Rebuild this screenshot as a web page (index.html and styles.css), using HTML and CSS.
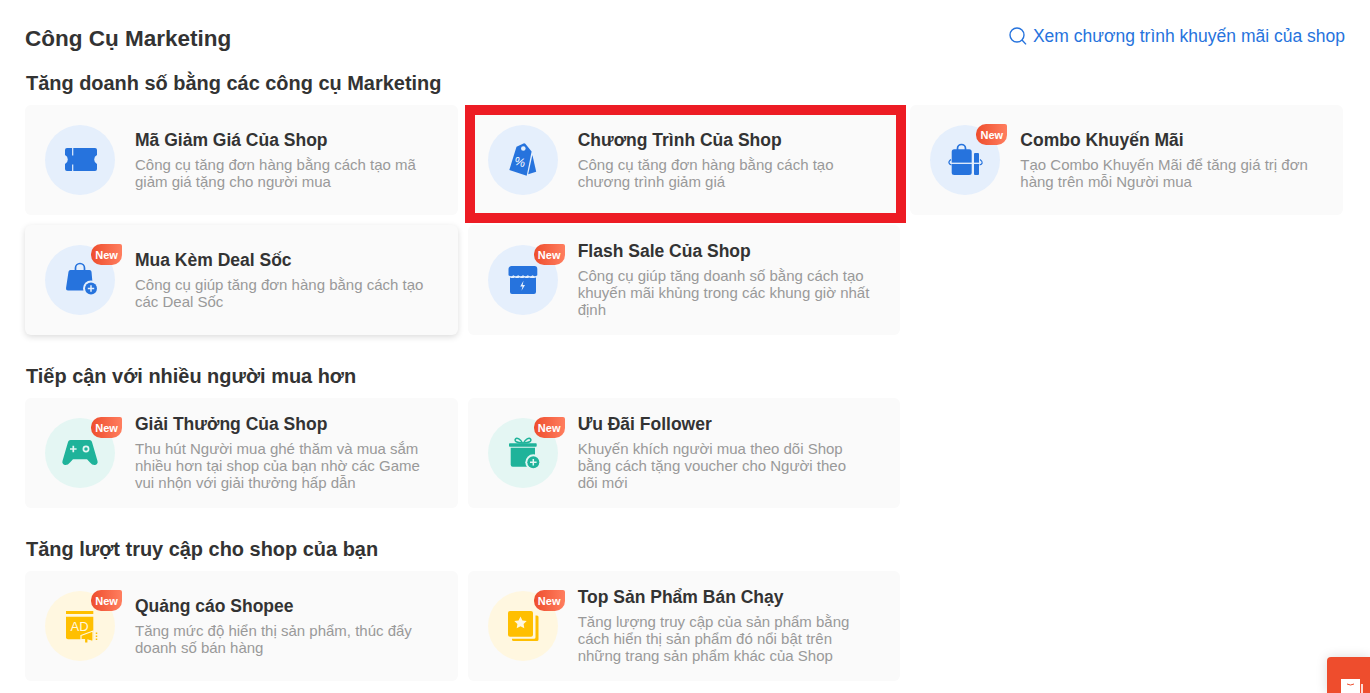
FILE: index.html
```html
<!DOCTYPE html>
<html lang="vi">
<head>
<meta charset="utf-8">
<title>Công Cụ Marketing</title>
<link rel="stylesheet" href="styles.css">
</head>
<body>
<main class="page">
  <header class="top">
    <h1 class="page-title">Công Cụ Marketing</h1>
    <a class="promo-link" href="#">
      <svg class="search-icon" viewBox="0 0 18 18" width="18" height="18"><circle cx="8" cy="8" r="7" fill="none" stroke="#2673dd" stroke-width="1.4"/><path d="M13 13l4 4.4" stroke="#2673dd" stroke-width="1.4" fill="none"/></svg>
      <span>Xem chương trình khuyến mãi của shop</span>
    </a>
  </header>

  <section class="section">
    <h2 class="section-title">Tăng doanh số bằng các công cụ Marketing</h2>
    <div class="grid">
      <article class="card">
        <div class="icon icon-blue">
          <svg viewBox="0 0 70 70" width="70" height="70"><path class="fill-blue" d="M22 23H50a2 2 0 0 1 2 2v5a5 5 0 0 0 0 9v5a2 2 0 0 1-2 2H22a2 2 0 0 1-2-2v-5a5 5 0 0 0 0-9v-5a2 2 0 0 1 2-2z"/><path d="M27.7 23v7.5M27.7 39.5V46" stroke="#e5effc" stroke-width="1.2" fill="none"/></svg>
        </div>
        <div class="body">
          <h3 class="card-title">Mã Giảm Giá Của Shop</h3>
          <p class="desc">Công cụ tăng đơn hàng bằng cách tạo mã giảm giá tặng cho người mua</p>
        </div>
      </article>
      <article class="card">
        <div class="icon icon-blue">
          <svg viewBox="0 0 70 70" width="70" height="70"><path class="fill-blue" d="M28.500 21.800l7-3.300q1-.4 1.800.3l6.300 7.700-4.900 24.200-17.400-5.700z"/><path class="fill-blue" d="M44.400 30l3.800 16.700-8 2.600z"/><circle cx="35.300" cy="23.500" r="2.300" fill="#e5effc"/><text class="percent" x="26.500" y="41" transform="rotate(15 32 37)">%</text></svg>
        </div>
        <div class="body">
          <h3 class="card-title">Chương Trình Của Shop</h3>
          <p class="desc">Công cụ tăng đơn hàng bằng cách tạo chương trình giảm giá</p>
        </div>
        <div class="highlight"></div>
      </article>
      <article class="card">
        <div class="icon icon-blue">
          <svg viewBox="0 0 70 70" width="70" height="70"><path d="M27.500 25v-1.500a4 4 0 0 1 8 0V25" fill="none" stroke="#2673dd" stroke-width="1.700"/><rect class="fill-blue" x="21.700" y="24.300" width="20" height="25.700" rx="2.500"/><rect class="fill-blue" x="44" y="28" width="5" height="22" rx="1"/><path d="M21 38.300h29" stroke="#e5effc" stroke-width="1.300"/><path d="M21 34.500q-2.600 2-2 3.500t2.500 2M50 34.500q2.600 2 2.200 3.500t-2.700 2" fill="none" stroke="#2673dd" stroke-width="1.200"/></svg>
          <span class="badge">New</span>
        </div>
        <div class="body">
          <h3 class="card-title">Combo Khuyến Mãi</h3>
          <p class="desc">Tạo Combo Khuyến Mãi để tăng giá trị đơn hàng trên mỗi Người mua</p>
        </div>
      </article>
      <article class="card card-hover">
        <div class="icon icon-blue">
          <svg viewBox="0 0 70 70" width="70" height="70"><path d="M30.500 25v-2a4.500 4.500 0 0 1 9 0v2" fill="none" stroke="#2673dd" stroke-width="1.700"/><path class="fill-blue" d="M25.500 25h19a2 2 0 0 1 2 1.800l1.500 16.700a2 2 0 0 1-2 2H23a2 2 0 0 1-2-2.200l2.500-16.600a2 2 0 0 1 2-1.700z"/><circle cx="46" cy="43.500" r="8" fill="#e5effc"/><circle cx="46" cy="43.500" r="6" fill="#2673dd"/><path d="M42.800 43.500h6.400M46 40.300v6.400" stroke="#e5effc" stroke-width="1.500"/></svg>
          <span class="badge">New</span>
        </div>
        <div class="body">
          <h3 class="card-title">Mua Kèm Deal Sốc</h3>
          <p class="desc">Công cụ giúp tăng đơn hàng bằng cách tạo các Deal Sốc</p>
        </div>
      </article>
      <article class="card">
        <div class="icon icon-blue">
          <svg viewBox="0 0 70 70" width="70" height="70"><path class="fill-blue" d="M24 21h22a3 3 0 0 1 3.300 3v6.300q-2.300 1.700-4.700 0-2.400 1.700-4.800 0-2.400 1.700-4.800 0-2.400 1.700-4.800 0-2.400 1.700-4.800 0-2.300 1.700-4.900 0V24a3 3 0 0 1 3.500-3z"/><path class="fill-blue" d="M22 32.500q2.500 1.200 4.800 0 2.400 1.200 4.800 0 2.400 1.200 4.800 0 2.400 1.200 4.800 0 2.400 1.200 6.800 0V47a2 2 0 0 1-2 2H24a2 2 0 0 1-2-2z"/><path d="M35.500 35.800l-3.300 5.700h2.300l-1 4.300 3.500-5.900h-2.300z" fill="#e5effc"/></svg>
          <span class="badge">New</span>
        </div>
        <div class="body">
          <h3 class="card-title">Flash Sale Của Shop</h3>
          <p class="desc">Công cụ giúp tăng doanh số bằng cách tạo khuyến mãi khủng trong các khung giờ nhất định</p>
        </div>
      </article>
    </div>
  </section>

  <section class="section">
    <h2 class="section-title">Tiếp cận với nhiều người mua hơn</h2>
    <div class="grid">
      <article class="card">
        <div class="icon icon-teal">
          <svg viewBox="0 0 70 70" width="70" height="70"><path class="fill-teal" d="M25.500 22h19a2.500 2.500 0 0 1 2.400 1.800L52.500 43a3 3 0 0 1-3 4q-2.500 0-4.500-2.500L42 41.300H28l-3 3.200Q23 47 20.500 47a3 3 0 0 1-3-4l5.600-19.200A2.500 2.500 0 0 1 25.500 22z"/><path d="M25 31h6.600M28.300 27.700v6.600" stroke="#e4f6f3" stroke-width="1.700"/><circle cx="41" cy="31" r="2.600" fill="none" stroke="#e4f6f3" stroke-width="1.700"/></svg>
          <span class="badge">New</span>
        </div>
        <div class="body">
          <h3 class="card-title">Giải Thưởng Của Shop</h3>
          <p class="desc">Thu hút Người mua ghé thăm và mua sắm nhiều hơn tại shop của bạn nhờ các Game vui nhộn với giải thưởng hấp dẫn</p>
        </div>
      </article>
      <article class="card">
        <div class="icon icon-teal">
          <svg viewBox="0 0 70 70" width="70" height="70"><path d="M34.500 25c-2-3.500-5.500-6-7-4s1.500 4 7 4zM35.500 25c2-3.500 5.500-6 7-4s-1.500 4-7 4z" fill="none" stroke="#1fb39a" stroke-width="1.500"/><rect class="fill-teal" x="21" y="25.300" width="27.700" height="3.400" rx=".8"/><path class="fill-teal" d="M22.700 29.800H47V48.700H24.700a2 2 0 0 1-2-2z"/><circle cx="45.300" cy="44.300" r="8" fill="#e4f6f3"/><circle cx="45.300" cy="44.300" r="6" fill="#1fb39a"/><path d="M42 44.300h6.600M45.300 41v6.600" stroke="#e4f6f3" stroke-width="1.500"/></svg>
          <span class="badge">New</span>
        </div>
        <div class="body">
          <h3 class="card-title">Ưu Đãi Follower</h3>
          <p class="desc">Khuyến khích người mua theo dõi Shop bằng cách tặng voucher cho Người theo dõi mới</p>
        </div>
      </article>
    </div>
  </section>

  <section class="section">
    <h2 class="section-title">Tăng lượt truy cập cho shop của bạn</h2>
    <div class="grid">
      <article class="card">
        <div class="icon icon-yellow">
          <svg viewBox="0 0 70 70" width="70" height="70"><rect class="fill-amber" x="21" y="20" width="27.300" height="3"/><path class="fill-amber" d="M21 25.700h27.300V48.300H23a2 2 0 0 1-2-2z"/><text class="ad-text" x="34.500" y="40.200">AD</text><path d="M36 44.500l12-4.500v10.500l-5-1.500v3h-3.500v-3.500h-3.500z" fill="#ffbf00" stroke="#fff7e0" stroke-width="1.200"/><path d="M51.500 41.500v1.500M51.500 44.500V46M51.500 47.500V49" stroke="#ffbf00" stroke-width="1.500"/></svg>
          <span class="badge">New</span>
        </div>
        <div class="body">
          <h3 class="card-title">Quảng cáo Shopee</h3>
          <p class="desc">Tăng mức độ hiển thị sản phẩm, thúc đẩy doanh số bán hàng</p>
        </div>
      </article>
      <article class="card">
        <div class="icon icon-yellow">
          <svg viewBox="0 0 70 70" width="70" height="70"><path class="fill-amber" d="M47.500 24.500H49a1.500 1.500 0 0 1 1.500 1.500v22.500a1.500 1.500 0 0 1-1.500 1.500H25.500a1.500 1.500 0 0 1-1.500-1.500V47.800H46a1.500 1.500 0 0 0 1.500-1.500z"/><rect class="fill-amber" x="20" y="20" width="25" height="25.700" rx="2"/><path d="M32.500 25.500l1.900 3.900 4.300.6-3.100 3 .7 4.300-3.800-2-3.800 2 .7-4.300-3.100-3 4.300-.6z" fill="#fff7e0"/></svg>
          <span class="badge">New</span>
        </div>
        <div class="body">
          <h3 class="card-title">Top Sản Phẩm Bán Chạy</h3>
          <p class="desc">Tăng lượng truy cập của sản phẩm bằng cách hiển thị sản phẩm đó nổi bật trên những trang sản phẩm khác của Shop</p>
        </div>
      </article>
    </div>
  </section>
</main>

<aside class="chat">
  <svg viewBox="0 0 43 36" width="43" height="36"><path d="M14 22h19v14H14z" fill="#fff"/><path d="M20 27q3.500 2 7 0" fill="none" stroke="#ee4d2d" stroke-width="1"/><path d="M34 27h2v9h-2z" fill="#fff" opacity=".8"/></svg>
</aside>
</body>
</html>
```
FILE: styles.css
```css
* {
  box-sizing: border-box;
}

html,
body {
  margin: 0;
  padding: 0;
  height: 693px;
  overflow: hidden;
  background: #fff;
  font-family: "Liberation Sans", Arial, sans-serif;
  color: #333;
}

.page {
  padding: 0 27px 0 25px;
}

.top {
  height: 71px;
  display: flex;
  justify-content: space-between;
  align-items: flex-start;
  padding-top: 24px;
}

.page-title {
  margin: 1px 0 0;
  font-size: 22.5px;
  line-height: 28px;
  font-weight: 700;
}

.promo-link {
  display: flex;
  align-items: center;
  gap: 6px;
  margin-right: -2px;
  color: #2673dd;
  font-size: 17.5px;
  line-height: 24px;
  text-decoration: none;
}

.section {
  margin-bottom: 29px;
}

.section-title {
  margin: 0 0 10px 1px;
  font-size: 19.95px;
  line-height: 24px;
  font-weight: 700;
}

.grid {
  display: grid;
  grid-template-columns: repeat(3, 1fr);
  gap: 10px;
}

.card {
  position: relative;
  height: 110px;
  display: flex;
  align-items: center;
  gap: 20px;
  padding: 20px;
  background: #fafafa;
  border-radius: 6px;
}

.card-hover {
  box-shadow: 0 2px 6px rgba(0, 0, 0, 0.14);
}

.icon {
  position: relative;
  flex: none;
  width: 70px;
  height: 70px;
  border-radius: 50%;
}

.icon svg {
  display: block;
}

.icon-blue {
  background: #e5effc;
}

.icon-teal {
  background: #e4f6f3;
}

.icon-yellow {
  background: #fff7e0;
}

.fill-blue {
  fill: #2673dd;
}

.fill-teal {
  fill: #1fb39a;
}

.fill-amber {
  fill: #ffbf00;
}

.percent {
  font-size: 12px;
  font-weight: 400;
  fill: #fff;
}

.ad-text {
  font-size: 13px;
  fill: #fff7e0;
  text-anchor: middle;
}

.badge {
  position: absolute;
  left: 46px;
  top: -1px;
  width: 31px;
  height: 21px;
  display: flex;
  align-items: center;
  justify-content: center;
  font-size: 11px;
  font-weight: 700;
  color: #fff;
  background: linear-gradient(90deg, #ee4d2d, #ff7e5f);
  border-radius: 10px 2px 10px 10px;
}

.body {
  max-width: 292px;
  padding-bottom: 0.6px;
}

.card-title {
  margin: 0 0 5px;
  font-size: 17.5px;
  line-height: 21px;
  font-weight: 700;
  color: #333;
}

.desc {
  margin: 0;
  font-size: 15px;
  line-height: 17px;
  color: #999;
}

.highlight {
  position: absolute;
  left: -3px;
  top: 0;
  width: 441px;
  height: 118px;
  border: 10px solid #ed1c24;
  pointer-events: none;
}

.chat {
  position: fixed;
  right: 0;
  bottom: 0;
  width: 43px;
  height: 36px;
  background: #ee4d2d;
  border-radius: 4px 0 0 0;
  box-shadow: 0 0 12px rgba(0, 0, 0, 0.14);
}

.chat svg {
  display: block;
}
```
